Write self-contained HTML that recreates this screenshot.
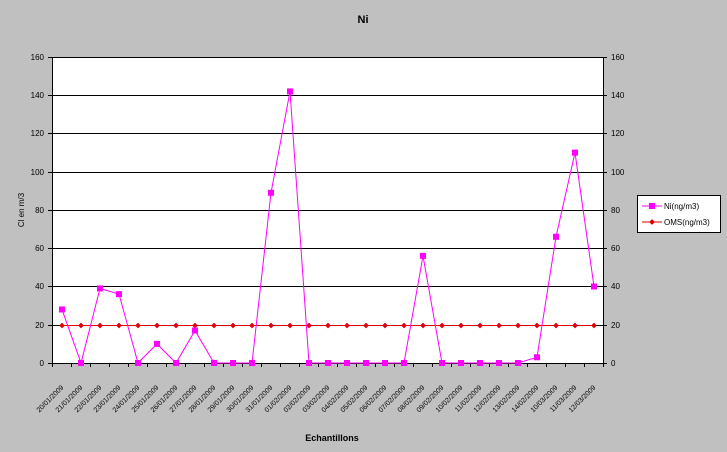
<!DOCTYPE html>
<html><head><style>html,body{margin:0;background:#c0c0c0;overflow:hidden}svg{display:block}</style></head><body>
<svg width="727" height="452" xmlns="http://www.w3.org/2000/svg" font-family="Liberation Sans, sans-serif">
<rect width="727" height="452" fill="#c0c0c0"/>
<text x="363" y="23" font-size="11" font-weight="bold" text-anchor="middle">Ni</text>
<rect x="52" y="57" width="551" height="306" fill="#fff"/>
<g stroke="#000" stroke-width="1">
<line x1="52" y1="57.5" x2="603" y2="57.5"/><line x1="52" y1="95.5" x2="603" y2="95.5"/><line x1="52" y1="133.5" x2="603" y2="133.5"/><line x1="52" y1="172.5" x2="603" y2="172.5"/><line x1="52" y1="210.5" x2="603" y2="210.5"/><line x1="52" y1="248.5" x2="603" y2="248.5"/><line x1="52" y1="286.5" x2="603" y2="286.5"/><line x1="52" y1="325.5" x2="603" y2="325.5"/><line x1="52" y1="363.5" x2="603" y2="363.5"/>
<line x1="52.5" y1="57" x2="52.5" y2="367"/><line x1="603.5" y1="57" x2="603.5" y2="367"/>
</g>
<g font-size="8" text-anchor="end">
<text x="44" y="60">160</text><text x="44" y="98">140</text><text x="44" y="136">120</text><text x="44" y="175">100</text><text x="44" y="213">80</text><text x="44" y="251">60</text><text x="44" y="289">40</text><text x="44" y="328">20</text><text x="44" y="366">0</text>
</g>
<g font-size="8" text-anchor="start">
<text x="611" y="60">160</text><text x="611" y="98">140</text><text x="611" y="136">120</text><text x="611" y="175">100</text><text x="611" y="213">80</text><text x="611" y="251">60</text><text x="611" y="289">40</text><text x="611" y="328">20</text><text x="611" y="366">0</text>
</g>
<g stroke="#000"><line x1="48" y1="57.5" x2="52" y2="57.5"/><line x1="48" y1="95.5" x2="52" y2="95.5"/><line x1="48" y1="133.5" x2="52" y2="133.5"/><line x1="48" y1="172.5" x2="52" y2="172.5"/><line x1="48" y1="210.5" x2="52" y2="210.5"/><line x1="48" y1="248.5" x2="52" y2="248.5"/><line x1="48" y1="286.5" x2="52" y2="286.5"/><line x1="48" y1="325.5" x2="52" y2="325.5"/><line x1="48" y1="363.5" x2="52" y2="363.5"/>
<line x1="603" y1="57.5" x2="607" y2="57.5"/><line x1="603" y1="95.5" x2="607" y2="95.5"/><line x1="603" y1="133.5" x2="607" y2="133.5"/><line x1="603" y1="172.5" x2="607" y2="172.5"/><line x1="603" y1="210.5" x2="607" y2="210.5"/><line x1="603" y1="248.5" x2="607" y2="248.5"/><line x1="603" y1="286.5" x2="607" y2="286.5"/><line x1="603" y1="325.5" x2="607" y2="325.5"/><line x1="603" y1="363.5" x2="607" y2="363.5"/></g>
<g id="xt" stroke="#000"></g>
<text x="24" y="210" font-size="8" transform="rotate(-90 24 210)" text-anchor="middle">Cl en m/3</text>
<text x="332" y="441" font-size="9" font-weight="bold" text-anchor="middle">Echantillons</text>
<g id="xl" font-size="7" text-anchor="end"></g>
<line x1="62" y1="325.5" x2="594" y2="325.5" stroke="#e00000"/>
<g id="oms" fill="#e00000"></g>
<polyline id="ni" fill="none" stroke="#ff00ff" stroke-width="1"/>
<g id="nim" fill="#ff00ff"></g>
<rect x="637.5" y="195.5" width="83" height="37" fill="#fff" stroke="#000"/>
<line x1="642" y1="206" x2="662" y2="206" stroke="#ff00ff"/><rect x="649" y="203" width="6" height="6" fill="#ff00ff"/>
<text x="664" y="209" font-size="8">Ni(ng/m3)</text>
<line x1="642" y1="222" x2="662" y2="222" stroke="#e00000"/><rect x="650" y="220" width="4" height="4" fill="#e00000" transform="rotate(45 652 222)"/>
<text x="664" y="225" font-size="8">OMS(ng/m3)</text>
<script>
var v=[28,0,39,36,0,10,0,17,0,0,0,89,142,0,0,0,0,0,0,56,0,0,0,0,0,3,66,110,40];
var d=["20/01","21/01","22/01","23/01","24/01","25/01","26/01","27/01","28/01","29/01","30/01","31/01","01/02","02/02","03/02","04/02","05/02","06/02","07/02","08/02","09/02","10/02","11/02","12/02","13/02","14/02","10/03","11/03","12/03"];
var ns="http://www.w3.org/2000/svg",pts=[],xl=document.getElementById('xl'),xt=document.getElementById('xt'),nm=document.getElementById('nim'),om=document.getElementById('oms');
function el(t,a,p){var e=document.createElementNS(ns,t);for(var k in a)e.setAttribute(k,a[k]);p.appendChild(e);return e;}
for(var i=0;i<=29;i++){var tx=52.5+i*19;el('line',{x1:tx,y1:363,x2:tx,y2:367},xt);}
for(i=0;i<29;i++){var x=62+i*19,y=363-v[i]*306/160;pts.push(x+','+y);
el('rect',{x:x-3,y:y-3,width:6,height:6},nm);
el('rect',{x:x-2,y:323.5,width:4,height:4,transform:'rotate(45 '+x+' 325.5)'},om);
var t=el('text',{x:x+2,y:388,transform:'rotate(-45 '+(x+2)+' 388)'},xl);t.textContent=d[i]+"/2009";}
document.getElementById('ni').setAttribute('points',pts.join(' '));
</script>
</svg>
</body></html>
